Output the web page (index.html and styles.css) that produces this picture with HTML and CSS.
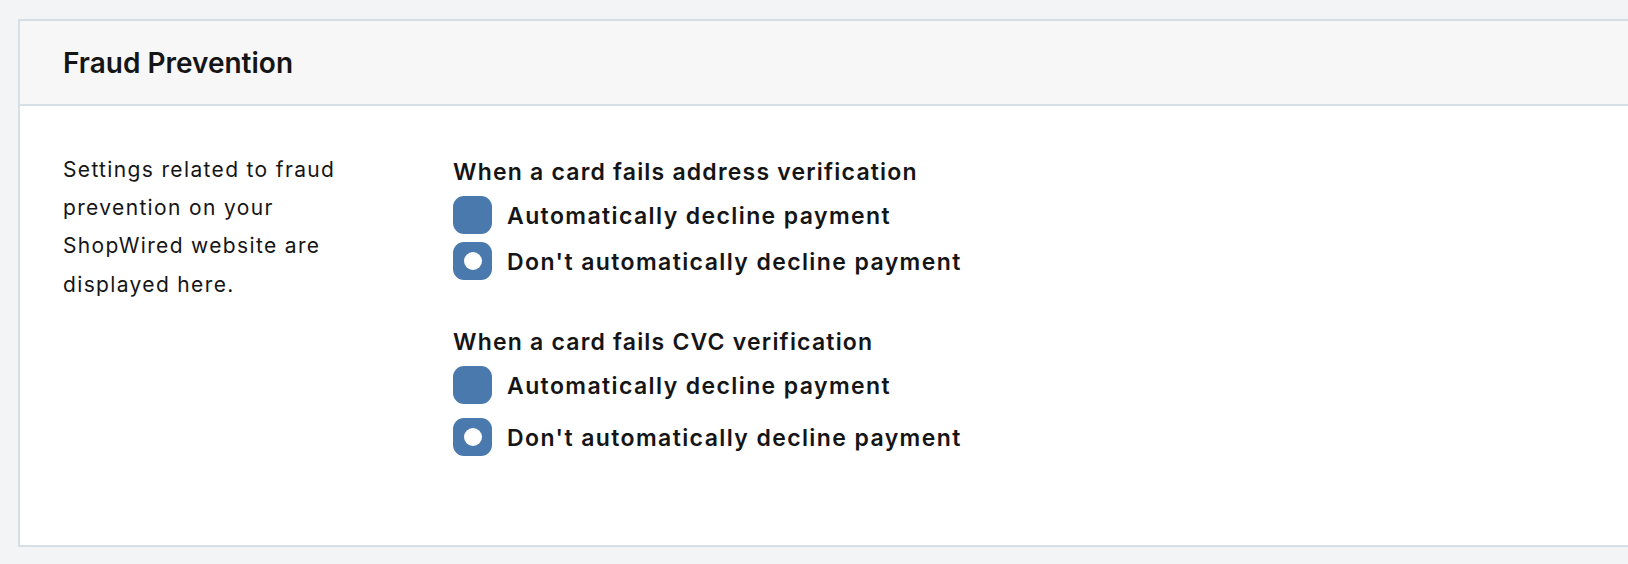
FILE: index.html
```html
<!DOCTYPE html>
<html lang="en">
<head>
<meta charset="utf-8">
<title>Fraud Prevention</title>
<link rel="stylesheet" href="styles.css">
</head>
<body>
<section class="card">
  <header class="card-header">
    <h2 class="card-title">Fraud Prevention</h2>
  </header>
  <div class="card-body">
    <p class="desc">Settings related to fraud prevention on your ShopWired website are displayed here.</p>
    <div class="options">
      <div class="group">
        <h3 class="group-title">When a card fails address verification</h3>
        <label class="option">
          <span class="radio"></span>
          <span class="option-label">Automatically decline payment</span>
        </label>
        <label class="option">
          <span class="radio radio-checked"></span>
          <span class="option-label">Don't automatically decline payment</span>
        </label>
      </div>
      <div class="group group-loose">
        <h3 class="group-title">When a card fails CVC verification</h3>
        <label class="option">
          <span class="radio"></span>
          <span class="option-label">Automatically decline payment</span>
        </label>
        <label class="option">
          <span class="radio radio-checked"></span>
          <span class="option-label">Don't automatically decline payment</span>
        </label>
      </div>
    </div>
  </div>
</section>
</body>
</html>
```
FILE: styles.css
```css
html, body {
  margin: 0;
  padding: 0;
}
body {
  background: #f3f4f6;
  font-family: Inter, "Liberation Sans", sans-serif;
  color: #151515;
  overflow: hidden;
  height: 564px;
}
.card {
  margin: 19px 0 0 18px;
  width: 1640px;
  height: 524px;
  background: #ffffff;
  border: 2px solid #d6dfe5;
  box-sizing: content-box;
}
.card-header {
  height: 83px;
  background: #f7f7f7;
  border-bottom: 2px solid #d6dfe5;
  display: flex;
  align-items: center;
  padding-left: 43px;
}
.card-title {
  margin: 0;
  font-size: 28px;
  font-weight: 600;
  line-height: 1;
  padding-top: 1px;
}
.card-body {
  display: flex;
  padding-left: 43px;
}
.desc {
  margin: 0;
  padding-top: 45px;
  width: 300px;
  font-size: 21px;
  line-height: 38.2px;
  letter-spacing: 1.35px;
}
.options {
  margin-left: 90px;
  padding-top: 53px;
}
.group-title {
  margin: 0 0 11px;
  font-size: 23px;
  font-weight: 600;
  line-height: 26px;
  letter-spacing: 1.2px;
}
.group + .group {
  margin-top: 49px;
}
.option {
  display: flex;
  align-items: center;
  gap: 15px;
  height: 38px;
}
.option + .option {
  margin-top: 8px;
}
.group-loose .option + .option {
  margin-top: 14px;
}
.radio {
  width: 39px;
  height: 38px;
  border-radius: 11px;
  background: #4a79ad;
  display: flex;
  align-items: center;
  justify-content: center;
  flex: none;
}
.radio-checked::after {
  content: "";
  width: 18px;
  height: 18px;
  border-radius: 50%;
  background: #ffffff;
}
.option-label {
  font-size: 23px;
  font-weight: 600;
  letter-spacing: 1.4px;
  padding-top: 2px;
}
```
